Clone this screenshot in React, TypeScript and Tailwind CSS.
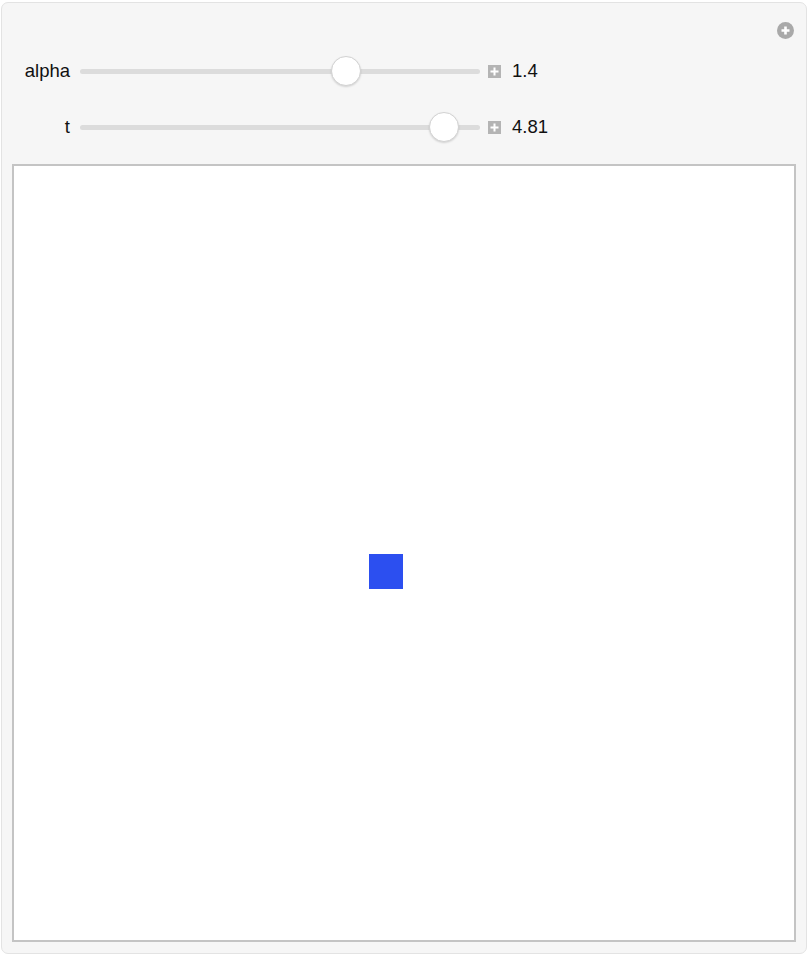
import React from 'react';

const font = { fontFamily: '"Liberation Sans", Arial, sans-serif' };

function PlusBox() {
  return (
    <div className="w-[13px] h-[13px] bg-[#b4b4b4] shrink-0">
      <svg width="13" height="13" viewBox="0 0 13 13" className="block">
        <path d="M6.5 2.5v8M2.5 6.5h8" stroke="#fff" strokeWidth="2" />
      </svg>
    </div>
  );
}

function SliderRow({ label, value, pos }: { label: string; value: string; pos: number }) {
  return (
    <div className="flex items-center h-[30px]">
      <div className="w-[68px] text-right text-[18.5px] text-[#111] leading-none">{label}</div>
      <div className="relative w-[400px] h-[30px] ml-[10px] flex items-center">
        <div className="w-full h-[5px] rounded-full bg-[#dcdcdc]" />
        <div
          className="absolute top-0 w-[30px] h-[30px] rounded-full bg-white border border-[#d2d2d2] shadow-[0_1px_2px_rgba(0,0,0,0.15)]"
          style={{ left: pos - 15 }}
        />
      </div>
      <div className="ml-[8px]">
        <PlusBox />
      </div>
      <div className="ml-[11px] text-[18.5px] text-[#111] leading-none">{value}</div>
    </div>
  );
}

export default function App() {
  return (
    <div className="bg-white w-[808px] h-[958px] pt-[2px] pl-px" style={font}>
      <div className="relative w-[806px] h-[952px] rounded-[7px] border border-[#e3e3e3] bg-[#f6f6f6] pt-[53px] px-[10px] pb-[10px] flex flex-col">
        {/* corner button */}
        <div className="absolute top-[19px] right-[12px] w-[17px] h-[17px] rounded-full bg-[#a9a9a9] flex items-center justify-center">
          <svg width="11" height="11" viewBox="0 0 11 11">
            <path d="M5.5 1.5v8M1.5 5.5h8" stroke="#fff" strokeWidth="2.6" />
          </svg>
        </div>

        {/* controls */}
        <div className="flex flex-col gap-[26px] -ml-[10px]">
          <SliderRow label="alpha" value="1.4" pos={266} />
          <SliderRow label="t" value="4.81" pos={364} />
        </div>

        {/* plot */}
        <div className="relative mt-[22px] w-[784px] h-[778px] border-2 border-[#c4c4c4] bg-white">
          <div className="absolute left-[355px] top-[388px] w-[34px] h-[35px] bg-[#2c4ff0]" />
        </div>
      </div>
    </div>
  );
}
